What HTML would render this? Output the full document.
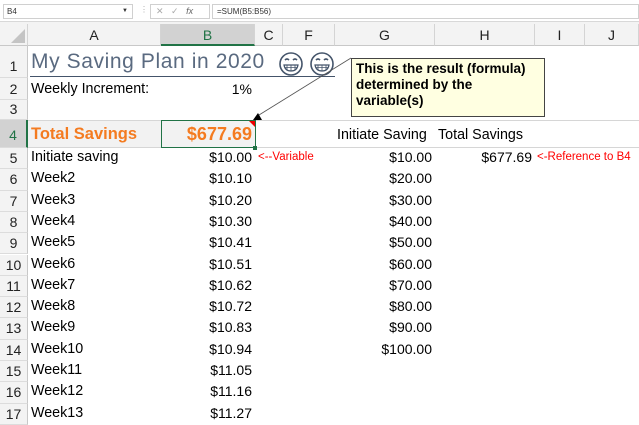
<!DOCTYPE html>
<html><head><style>
*{margin:0;padding:0;box-sizing:border-box}
body{width:639px;height:410px;overflow:hidden;background:#fff;font-family:"Liberation Sans",sans-serif;position:relative;font-size:14px;color:#000}
.a{position:absolute;white-space:nowrap}
.hdr{position:absolute;top:24px;height:22px;background:#f3f3f3;border-right:1px solid #d4d4d4;border-bottom:1px solid #c8c8c8;text-align:center;font-size:14px;line-height:22px;color:#222}
.rh{position:absolute;left:0;width:28px;background:#f3f3f3;border-bottom:1px solid #dcdcdc;border-right:1px solid #c8c8c8;text-align:center;font-size:14px;color:#222}
.r{text-align:right}
.t{font-size:14.3px}
.red{color:#f00;font-size:11.5px}
</style></head><body>
<div class="a" style="left:0;top:0;width:639px;height:22px;background:#fff;border-bottom:1px solid #d8d8d8"></div>
<div class="a" style="left:3px;top:4px;width:130px;height:15px;border:1px solid #d0d0d0;font-size:8px;line-height:13px;padding-left:3px;color:#333">B4<span style="position:absolute;right:4px;font-size:6px">▼</span></div>
<div class="a" style="left:140px;top:5px;font-size:8px;color:#aaa">⋮</div>
<div class="a" style="left:150px;top:4px;width:60px;height:15px;border:1px solid #d0d0d0;font-size:9px;color:#aaa;line-height:13px">&nbsp;&nbsp;✕&nbsp;&nbsp;&nbsp;✓&nbsp;&nbsp;&nbsp;<i style="color:#666">fx</i></div>
<div class="a" style="left:212px;top:4px;width:427px;height:15px;border:1px solid #d0d0d0;font-size:8px;line-height:13px;padding-left:4px;color:#333">=SUM(B5:B56)</div>
<div class="a" style="left:0;top:22px;width:639px;height:2px;background:#f3f3f3"></div>
<div class="hdr" style="left:0;width:28px;background:#f3f3f3"><svg width="16" height="16" style="position:absolute;right:2px;bottom:2px"><polygon points="16,2 16,16 2,16" fill="#c4c4c4"/></svg></div>
<div class="hdr" style="left:28px;width:133px">A</div>
<div class="hdr" style="left:161px;width:94px;background:#d2d2d2;color:#217346;border-bottom:2px solid #217346">B</div>
<div class="hdr" style="left:255px;width:28px">C</div>
<div class="hdr" style="left:283px;width:52px">F</div>
<div class="hdr" style="left:335px;width:100px">G</div>
<div class="hdr" style="left:435px;width:100px">H</div>
<div class="hdr" style="left:535px;width:50px">I</div>
<div class="hdr" style="left:585px;width:54px">J</div>

<div class="rh" style="top:46px;height:32px;line-height:40px">1</div>
<div class="rh" style="top:78px;height:22px;line-height:22px">2</div>
<div class="rh" style="top:100px;height:20px;line-height:18px">3</div>
<div class="rh" style="top:120px;height:28px;line-height:30px;background:#d2d2d2;color:#217346;border-right:2px solid #217346">4</div>

<div class="a" style="left:28px;top:120px;width:611px;height:1px;background:#d6d6d6"></div>
<div class="a" style="left:28px;top:147px;width:611px;height:1px;background:#d6d6d6"></div>
<div class="a" style="left:28px;top:121px;width:227px;height:26px;background:#f2f2f2"></div>
<div class="a" style="left:161px;top:120px;width:95px;height:28px;border:1px solid #217346"></div>
<div class="a" style="left:253px;top:146px;width:4px;height:4px;background:#217346"></div>
<svg class="a" style="left:249px;top:121px" width="6" height="6"><polygon points="0,0 6,0 6,6" fill="#e00"/></svg>

<div class="a" style="left:31px;top:50px;font-size:21px;color:#5a6a80;letter-spacing:0.6px">My Saving Plan in 2020</div>
<div class="a" style="left:30px;top:76px;width:305px;height:1px;background:#44546a"></div>
<svg class="a" style="left:276px;top:51px" width="60" height="26">
<g fill="none" stroke="#44546a" stroke-width="1.6">
<circle cx="15" cy="13" r="11"/><circle cx="46" cy="13" r="11"/>
<path d="M9 9q2-2 4 0M17 9q2-2 4 0M40 9q2-2 4 0M48 9q2-2 4 0"/>
<path d="M8 14h14q-1 6-7 6q-6 0-7-6zM39 14h14q-1 6-7 6q-6 0-7-6z" stroke-width="1.2"/>
<path d="M8.5 16.5h13M11 14v5.5M15 14v6M19 14v5.5M39.5 16.5h13M42 14v5.5M46 14v6M50 14v5.5" stroke-width="0.8"/>
</g></svg>
<div class="a t" style="left:31px;top:81px">Weekly Increment:</div>
<div class="a r" style="left:161px;top:81px;width:91px">1%</div>
<div class="a" style="left:31px;top:125px;font-size:16.5px;font-weight:bold;color:#f47b20">Total Savings</div>
<div class="a r" style="left:161px;top:124px;width:91px;font-size:18px;font-weight:bold;color:#f47b20">$677.69</div>
<div class="a t" style="left:337px;top:127px">Initiate Saving</div>
<div class="a t" style="left:438px;top:127px">Total Savings</div>

<svg class="a" style="left:250px;top:55px" width="110" height="70"><line x1="101" y1="3" x2="9" y2="60" stroke="#555" stroke-width="0.8"/><polygon points="3,65 12,65 8,58" fill="#000"/></svg>
<div class="a" style="left:351px;top:58px;width:194px;height:59px;background:#ffffe1;border:1px solid #444;font-weight:bold;font-size:13.5px;line-height:16px;padding:2px 4px;white-space:normal">This is the result (formula)<br>determined by the<br>variable(s)</div>
<div id="c"></div>
<script>
var rows=['Initiate saving','Week2','Week3','Week4','Week5','Week6','Week7','Week8','Week9','Week10','Week11','Week12','Week13'];
var b=['$10.00','$10.10','$10.20','$10.30','$10.41','$10.51','$10.62','$10.72','$10.83','$10.94','$11.05','$11.16','$11.27'];
var h='';
for(var i=0;i<13;i++){var t=148+i*21.3;
h+='<div class="rh" style="top:'+t+'px;height:21.3px;line-height:21px">'+(i+5)+'</div>';
h+='<div class="a t" style="left:31px;top:'+(t+1)+'px">'+rows[i]+'</div>';
h+='<div class="a r" style="left:161px;top:'+(t+1)+'px;width:91px">'+b[i]+'</div>';
if(i<10)h+='<div class="a r" style="left:335px;top:'+(t+1)+'px;width:97px">$'+((i+1)*10)+'.00</div>';
}
h+='<div class="a red" style="left:258px;top:151px">&lt;--Variable</div>';
h+='<div class="a r" style="left:435px;top:149px;width:97px">$677.69</div>';
h+='<div class="a red" style="left:537px;top:151px">&lt;-Reference to B4</div>';
document.getElementById('c').innerHTML=h;
</script>
</body></html>
